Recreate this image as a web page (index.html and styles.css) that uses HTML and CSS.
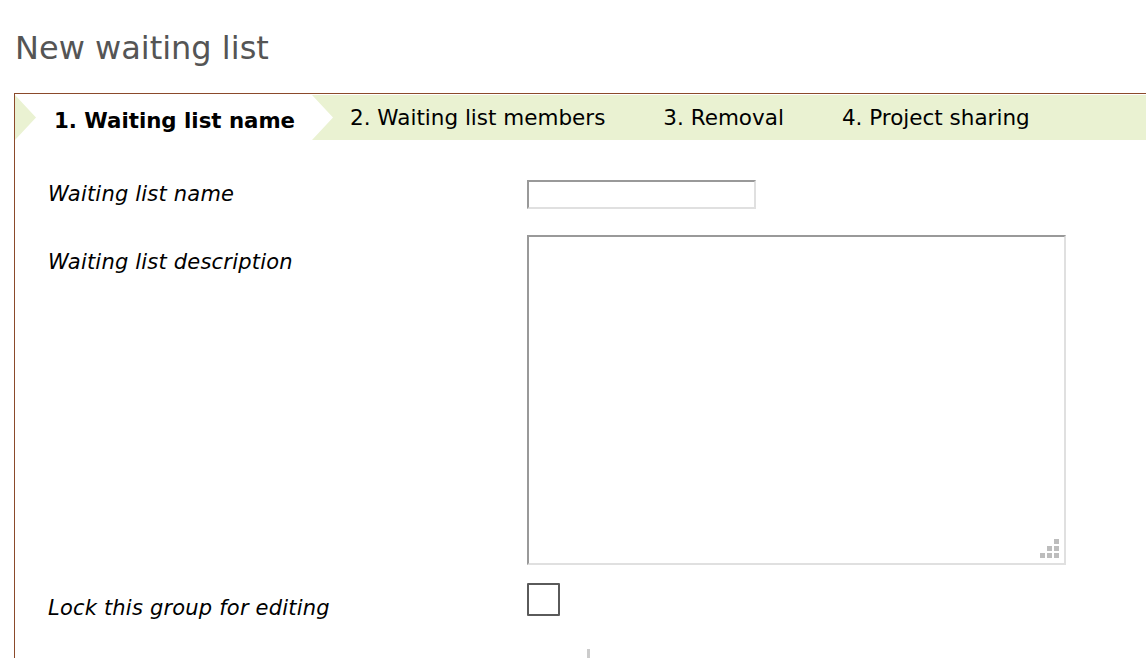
FILE: index.html
```html
<!DOCTYPE html>
<html>
<head>
<meta charset="utf-8">
<link rel="stylesheet" href="styles.css">
</head>
<body>
<h1 class="title">New waiting list</h1>
<div class="wizard">
  <div class="tabs">
    <div class="tab tab-active">1. Waiting list name</div>
    <div class="tab tab-first">2. Waiting list members</div>
    <div class="tab">3. Removal</div>
    <div class="tab">4. Project sharing</div>
  </div>
  <div class="form">
    <div class="row row-name">
      <label class="label">Waiting list name</label>
      <div class="field"><input class="text-input" type="text"></div>
    </div>
    <div class="row row-desc">
      <label class="label">Waiting list description</label>
      <div class="field">
        <div class="textarea-wrap">
          <textarea class="textarea"></textarea>
          <svg class="grip" width="19" height="19" viewBox="0 0 19 19">
            <rect x="14" y="0" width="5" height="5" fill="#bdbdbd"/>
            <rect x="7" y="7" width="5" height="5" fill="#bdbdbd"/>
            <rect x="14" y="7" width="5" height="5" fill="#bdbdbd"/>
            <rect x="0" y="14" width="5" height="5" fill="#bdbdbd"/>
            <rect x="7" y="14" width="5" height="5" fill="#bdbdbd"/>
            <rect x="14" y="14" width="5" height="5" fill="#bdbdbd"/>
          </svg>
        </div>
      </div>
    </div>
    <div class="row row-lock">
      <label class="label">Lock this group for editing</label>
      <div class="field"><span class="checkbox"></span></div>
    </div>
    <div class="row row-next">
      <span class="label"></span>
      <div class="field"><span class="tick"></span></div>
    </div>
  </div>
</div>
</body>
</html>
```

FILE: styles.css
```css
html, body {
  margin: 0;
  padding: 0;
  background: #ffffff;
  overflow: hidden;
}
body {
  font-family: "DejaVu Sans", Verdana, sans-serif;
  color: #000;
  width: 1146px;
  height: 658px;
}
.title {
  margin: 0;
  padding: 28px 0 0 15px;
  height: 64px;
  box-sizing: border-box;
  font-size: 32px;
  font-weight: normal;
  color: #555555;
  line-height: 40px;
}
.wizard {
  margin-left: 14px;
  border-top: 1px solid #8b4a2b;
  border-left: 1px solid #8b4a2b;
  margin-top: 29px;
  height: 564px;
}
.tabs {
  display: flex;
  margin-top: 1px;
  height: 45px;
  background: #eaf2d2;
  font-size: 21.5px;
}
.tab {
  display: flex;
  align-items: center;
  padding: 0 29px;
  height: 45px;
  white-space: nowrap;
}
.tab-active {
  background: #ffffff;
  font-weight: bold;
  font-size: 21.3px;
  padding: 6px 0 0 39px;
  box-sizing: border-box;
  width: 318px;
  flex: none;
  clip-path: polygon(0 0, 297px 0, 318px 50%, 297px 100%, 0 100%, 21px 50%);
}
.tab-first {
  padding-left: 17px;
}
.form {
  padding: 40px 0 0 33px;
}
.row {
  display: grid;
  grid-template-columns: 479px 1fr;
  align-items: start;
}
.label {
  font-style: italic;
  font-size: 21px;
  line-height: 24px;
  letter-spacing: 0.2px;
}
.row-name {
  height: 55px;
}
.row-name .label {
  padding-top: 2px;
}
.text-input {
  display: block;
  margin: 0;
  width: 229px;
  height: 29px;
  box-sizing: border-box;
  border: 2px solid;
  border-color: #999999 #e0e0e0 #e0e0e0 #999999;
  padding: 0;
  outline: none;
  background: #fff;
}
.row-desc {
  height: 348px;
}
.row-desc .label {
  padding-top: 15px;
}
.textarea-wrap {
  position: relative;
  width: 539px;
  height: 330px;
}
.textarea {
  display: block;
  margin: 0;
  width: 539px;
  height: 330px;
  box-sizing: border-box;
  border: 2px solid;
  border-color: #999999 #e0e0e0 #e0e0e0 #999999;
  resize: none;
  outline: none;
  background: #fff;
}
.grip {
  position: absolute;
  right: 7px;
  bottom: 7px;
}
.row-lock {
  height: 66px;
}
.row-lock .label {
  padding-top: 13px;
}
.checkbox {
  display: block;
  width: 33px;
  height: 33px;
  box-sizing: border-box;
  border: 2px solid #5a5a5a;
  border-radius: 1px;
  background: #fff;
}
.row-next {
  height: 9px;
}
.tick {
  display: block;
  margin-left: 60px;
  width: 3px;
  height: 9px;
  background: #cccccc;
}
```
